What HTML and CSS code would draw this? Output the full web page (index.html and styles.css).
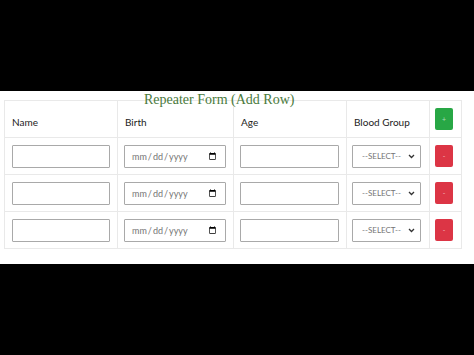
FILE: index.html
```html
<!DOCTYPE html>
<html>
<head>
<meta charset="utf-8">
<link rel="stylesheet" href="styles.css">
</head>
<body>
<div class="sheet">
  <h2 class="title">Repeater Form (Add Row)</h2>
  <table class="grid">
    <colgroup>
      <col class="c-name"><col class="c-birth"><col class="c-age"><col class="c-blood"><col class="c-btn">
    </colgroup>
    <thead>
      <tr>
        <th>Name</th>
        <th>Birth</th>
        <th>Age</th>
        <th>Blood Group</th>
        <th class="btn-cell"><button class="btn add">+</button></th>
      </tr>
    </thead>
    <tbody>
      <tr>
        <td class="p-name"><input class="field f-name" type="text"></td>
        <td class="p-birth"><input class="field f-birth" type="date"></td>
        <td class="p-age"><input class="field f-age" type="text"></td>
        <td class="p-blood"><div class="sel"><select class="field f-blood"><option>--SELECT--</option></select><svg class="chev" width="7" height="5" viewBox="0 0 7 5"><path d="M1 1 L3.5 3.5 L6 1" fill="none" stroke="#333" stroke-width="1.3"/></svg></div></td>
        <td class="btn-cell"><button class="btn del">-</button></td>
      </tr>
      <tr>
        <td class="p-name"><input class="field f-name" type="text"></td>
        <td class="p-birth"><input class="field f-birth" type="date"></td>
        <td class="p-age"><input class="field f-age" type="text"></td>
        <td class="p-blood"><div class="sel"><select class="field f-blood"><option>--SELECT--</option></select><svg class="chev" width="7" height="5" viewBox="0 0 7 5"><path d="M1 1 L3.5 3.5 L6 1" fill="none" stroke="#333" stroke-width="1.3"/></svg></div></td>
        <td class="btn-cell"><button class="btn del">-</button></td>
      </tr>
      <tr>
        <td class="p-name"><input class="field f-name" type="text"></td>
        <td class="p-birth"><input class="field f-birth" type="date"></td>
        <td class="p-age"><input class="field f-age" type="text"></td>
        <td class="p-blood"><div class="sel"><select class="field f-blood"><option>--SELECT--</option></select><svg class="chev" width="7" height="5" viewBox="0 0 7 5"><path d="M1 1 L3.5 3.5 L6 1" fill="none" stroke="#333" stroke-width="1.3"/></svg></div></td>
        <td class="btn-cell"><button class="btn del">-</button></td>
      </tr>
    </tbody>
  </table>
</div>
</body>
</html>
```
FILE: styles.css
```css
html, body {
  margin: 0;
  padding: 0;
  background: #000;
}
body {
  width: 474px;
  height: 355px;
  overflow: hidden;
  font-family: Lato, "Open Sans", sans-serif;
}
.sheet {
  margin-top: 91px;
  height: 173px;
  background: #fff;
  padding: 1px 0 0 4px;
  box-sizing: border-box;
}
.title {
  position: relative;
  z-index: 1;
  margin: 0 0 -8px 0;
  padding-left: 140px;
  font-family: "Liberation Serif", "Times New Roman", serif;
  font-weight: normal;
  font-size: 14px;
  line-height: 16px;
  color: #4a7a3c;
}
.grid {
  border-collapse: collapse;
  table-layout: fixed;
  width: 457px;
}
.c-name { width: 113px; }
.c-birth { width: 116px; }
.c-age { width: 113px; }
.c-blood { width: 83px; }
.c-btn { width: 32px; }
.grid th, .grid td {
  border: 1px solid #e9e9e9;
  padding: 0;
}
.grid th {
  height: 29px;
  text-align: left;
  vertical-align: bottom;
  padding: 0 0 7px 7px;
  font-weight: normal;
  font-size: 10px;
  line-height: 15px;
  color: #222;
}
.grid td {
  height: 36px;
  vertical-align: middle;
}
.grid td.btn-cell {
  padding: 0 0 0 5px;
  vertical-align: middle;
}
.grid thead th.btn-cell {
  height: 29px;
  vertical-align: top;
  padding: 7px 0 0 5px;
}
.p-name { padding-left: 7px !important; }
.p-birth { padding-left: 6px !important; }
.p-age { padding-left: 6px !important; }
.p-blood { padding-left: 5px !important; }
.field {
  display: block;
  box-sizing: border-box;
  height: 23px;
  margin: 0;
  border: 1px solid #a9a9a9;
  border-radius: 1px;
  background: #fff;
  font-family: Lato, "Open Sans", sans-serif;
  font-size: 9px;
  color: #757575;
  padding: 0 6px;
}
.f-name { width: 98px; }
.f-birth { width: 102px; }
.f-age { width: 99px; }
.sel {
  position: relative;
  width: 69px;
}
.f-blood {
  width: 69px;
  font-size: 8px;
  padding: 0 12px 0 9px;
  -webkit-appearance: none;
  appearance: none;
}
.chev {
  position: absolute;
  right: 6px;
  top: 9px;
  pointer-events: none;
}
.btn {
  display: block;
  width: 18px;
  height: 22px;
  border: none;
  border-radius: 2px;
  padding: 0;
  font-size: 7px;
  line-height: 22px;
  text-align: center;
  color: rgba(255,255,255,0.6);
  font-family: Lato, sans-serif;
}
.add { background: #28a745; }
.del { background: #dc3545; }
```
